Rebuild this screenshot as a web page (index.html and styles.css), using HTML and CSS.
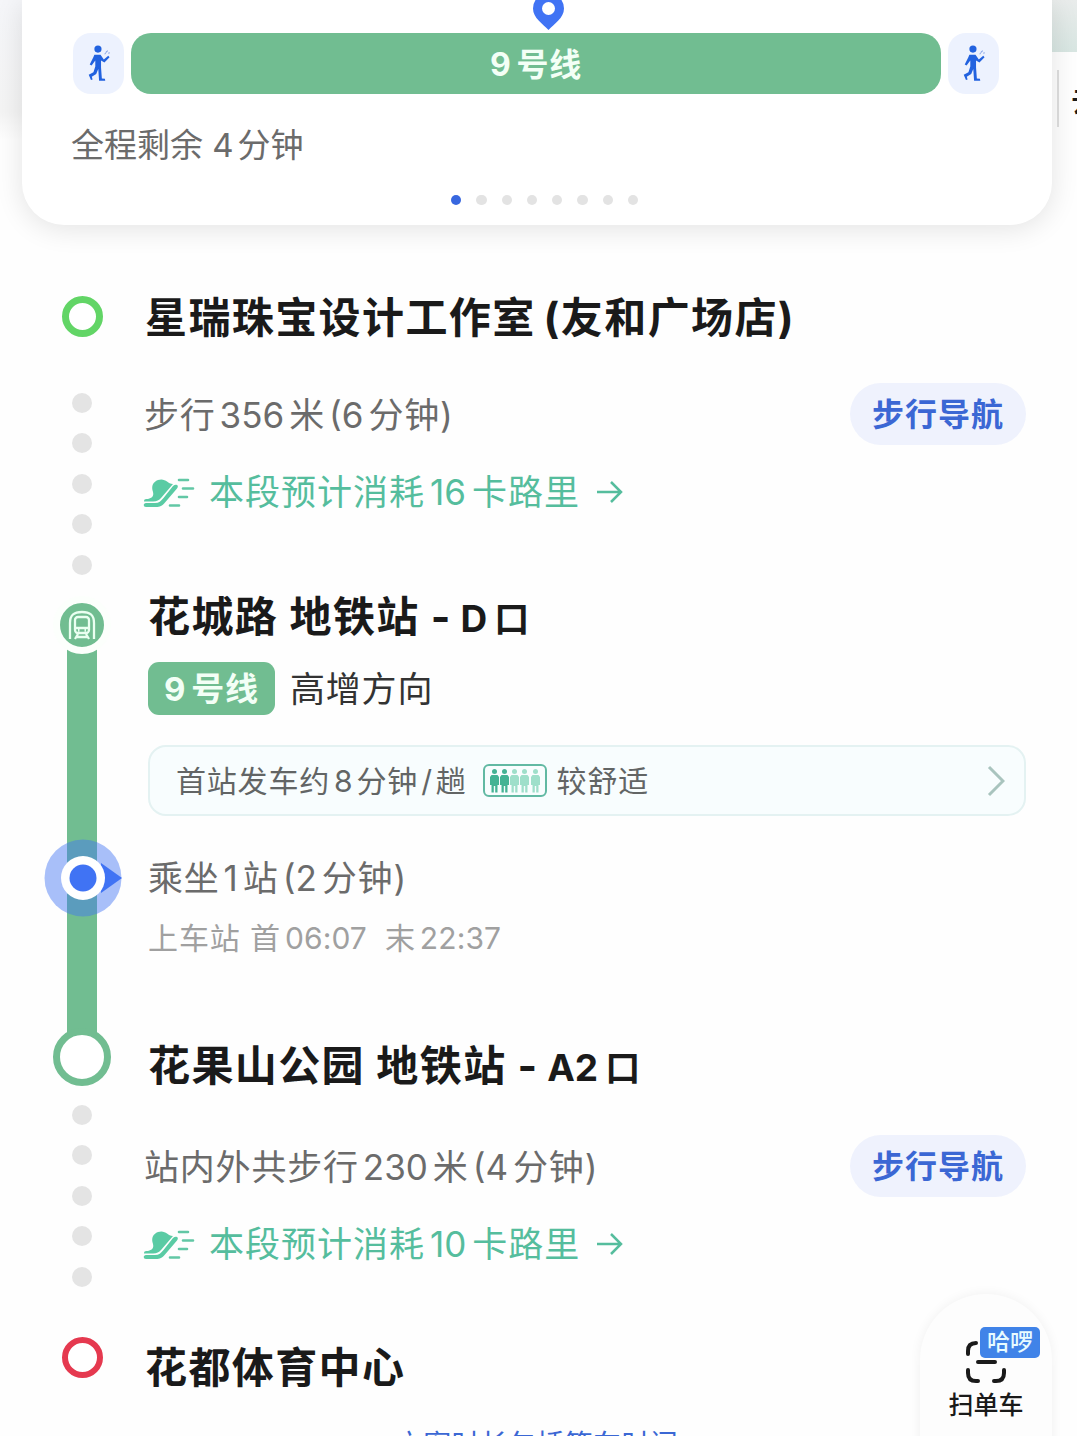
FILE: index.html
```html
<!DOCTYPE html>
<html lang="zh-CN">
<head>
    <meta charset="UTF-8">
    <meta name="viewport" content="width=device-width, initial-scale=1.0">
    <title>公交路线</title>
    <link rel="stylesheet" href="styles.css">
</head>
<body>
    <svg class="sprite" width="0" height="0">
        <symbol id="walker" viewBox="0 0 24 36">
            <circle cx="10.500" cy="4" r="3.500"/>
            <path d="M7 9.500h6l3.200 4.500 4.300-3.500 1.300 1.300-5 5.200-3.300-1.800v6.800l.8 10.500 3 .3.300 2h-6l-.8-11.500-2 5-4.300 2.700.8 2.500-1.600.5-2.200-5 4.600-2.600 1.800-5.400v-6l-3.600 5-1.800-1 3.500-7z"/>
            <path d="M18 7.500l2-2M20.500 8l1.500-.5M17 9l1-1" class="spark"/>
        </symbol>
        <symbol id="shoe" viewBox="0 0 52 32">
            <path d="M1 25c0-2 2-2 4-2 4-1 6-3 5-7-2-6 0-10 5-12 4-1.500 7 0 9 1.500 2 1.500 3 2.500 6 2.500L18 22c-2 2-4 3.500-8 3.500H1z"/>
            <path d="M30 10c3-2.500 6.500-.5 4 2.500L22 26.500c-3 3.500-5 4.500-9 4.500H3c-3 0-3-4 0-4h9c4 0 6-2 8.500-5z"/>
            <path d="M36 4h9M40 12.500h10M36 21h8M27 29.500h9" class="speed"/>
        </symbol>
        <symbol id="arrow" viewBox="0 0 27 24">
            <path d="M1 12h24M15 2l10 10-10 10"/>
        </symbol>
        <symbol id="person" viewBox="0 0 9 24">
            <circle cx="4.500" cy="2.500" r="2.500"/>
            <path d="M1.500 6h6L9 8v8H7.500v7.500h-2.300V17H3.800v6.500H1.500V16H0V8z"/>
        </symbol>
    </svg>

    <div class="map-left"></div>
    <div class="map-right"><span class="map-divider"></span><span class="map-label">去</span></div>

    <div class="card">
        <svg class="pin" width="31" height="34" viewBox="0 0 31 34">
            <path d="M15.500 34C10 28 0 22 0 12.500a15.500 15.500 0 0 1 31 0C31 22 21 28 15.500 34z"/>
            <circle cx="15.500" cy="12.500" r="6.500"/>
        </svg>
        <div class="route-bar">
            <span class="walk-chip"><svg><use href="#walker"/></svg></span>
            <span class="line-bar"><span class="n">9</span>号线</span>
            <span class="walk-chip"><svg><use href="#walker"/></svg></span>
        </div>
        <div class="remaining">全程剩余 <span class="n">4</span>分钟</div>
        <div class="pager">
            <i class="active"></i><i></i><i></i><i></i><i></i><i></i><i></i><i></i>
        </div>
    </div>

    <div class="timeline">
        <section class="stop origin">
            <div class="rail"><span class="ring green"></span></div>
            <h2>星瑞珠宝设计工作室<span class="paren">(</span>友和广场店)</h2>
        </section>

        <section class="walk">
            <div class="rail dots"><i></i><i></i><i></i><i></i><i></i></div>
            <div class="walk-body">
                <div class="walk-info">
                    <p>步行<span class="n">356</span>米<span class="n">(6</span>分钟)</p>
                    <a class="nav-btn">步行导航</a>
                </div>
                <div class="calorie">
                    <svg class="shoe"><use href="#shoe"/></svg>
                    <span class="calorie-text">本段预计消耗<span class="n">16</span>卡路里</span>
                    <svg class="arrow"><use href="#arrow"/></svg>
                </div>
            </div>
        </section>

        <section class="metro">
            <div class="rail">
                <span class="train">
                    <svg width="28" height="30" viewBox="0 0 28 30">
                        <path d="M2 29V13C2 5 6 2 14 2s12 3 12 11v16"/>
                        <rect x="7" y="7" width="14" height="16" rx="3"/>
                        <path d="M7 18h14M10 20.500h1.500M16.500 20.500H18M10 24l-3 5M18 24l3 5M9 27h10"/>
                    </svg>
                </span>
                <span class="track"></span>
                <svg class="location" width="80" height="78" viewBox="0 0 80 78">
                    <circle class="halo" cx="39" cy="39" r="38.500"/>
                    <path d="M57 24l21 15-21 15z"/>
                    <circle class="white" cx="39" cy="39" r="22"/>
                    <circle cx="39" cy="39" r="13.500"/>
                </svg>
            </div>
            <div class="metro-body">
                <h2>花城路 地铁站<span class="dash">-</span><span class="exit">D</span><span class="exit-cn">口</span></h2>
                <div class="direction">
                    <span class="badge"><span class="n">9</span>号线</span>
                    <span>高增方向</span>
                </div>
                <div class="schedule">
                    <span>首站发车约<span class="n">8</span>分钟<span class="slash">/</span>趟</span>
                    <span class="crowd">
                        <svg><use href="#person"/></svg><svg><use href="#person"/></svg><svg class="dim"><use href="#person"/></svg><svg class="dim"><use href="#person"/></svg><svg class="dim"><use href="#person"/></svg>
                    </span>
                    <span>较舒适</span>
                    <svg class="chevron" width="18" height="32" viewBox="0 0 18 32"><path d="M2 2l14 14L2 30"/></svg>
                </div>
                <p class="ride">乘坐<span class="n">1</span>站<span class="n">(2</span>分钟)</p>
                <p class="hours">上车站 首<span class="n">06:07</span><span class="last">末</span><span class="n">22:37</span></p>
            </div>
        </section>

        <section class="stop transfer">
            <div class="rail"><span class="ring station"></span></div>
            <h2>花果山公园 地铁站<span class="dash">-</span><span class="exit">A2</span><span class="exit-cn">口</span></h2>
        </section>

        <section class="walk second">
            <div class="rail dots"><i></i><i></i><i></i><i></i><i></i></div>
            <div class="walk-body">
                <div class="walk-info">
                    <p>站内外共步行<span class="n">230</span>米<span class="n">(4</span>分钟)</p>
                    <a class="nav-btn">步行导航</a>
                </div>
                <div class="calorie">
                    <svg class="shoe"><use href="#shoe"/></svg>
                    <span class="calorie-text">本段预计消耗<span class="n">10</span>卡路里</span>
                    <svg class="arrow"><use href="#arrow"/></svg>
                </div>
            </div>
        </section>

        <section class="stop destination">
            <div class="rail"><span class="ring red"></span></div>
            <h2>花都体育中心</h2>
        </section>
    </div>

    <p class="footnote">方案时长包括等车时间</p>

    <div class="scan">
        <div class="scan-icon">
            <svg width="40" height="42" viewBox="0 0 40 42">
                <path d="M2 13V10q0-8 8-8M2 29v3q0 8 8 8h2M38 29v3q0 8-8 8h-2M12 21h17"/>
            </svg>
            <span class="brand">哈啰</span>
        </div>
        <span>扫单车</span>
    </div>
</body>
</html>
```
FILE: styles.css
```css
:root {
    --green: #71bd91;
    --mint: #55bd9d;
    --blue: #4073f4;
    --link: #3b67d4;
    --text: #1a1a1a;
    --grey: #6b6b6b;
}

* {
    box-sizing: border-box;
}

body {
    position: relative;
    width: 1077px;
    height: 1436px;
    margin: 0;
    overflow: hidden;
    background-color: #fefefe;
    color: var(--text);
    font-family: Inter, 'Noto Sans CJK SC', sans-serif;
}

h2, p {
    margin: 0;
    white-space: nowrap;
}

.sprite {
    position: absolute;
}

/* map edges behind the card */
.map-left, .map-right {
    position: absolute;
    top: 0;
}

.map-left {
    left: 0;
    width: 60px;
    height: 140px;
    background: linear-gradient(#f5f6f9, #f4f4f4 80%, #fefefe);
}

.map-right {
    right: 0;
    width: 40px;
    height: 52px;
    background: linear-gradient(#e9eceb, #d8e6e2);
}

.map-divider {
    position: absolute;
    top: 70px;
    left: 20px;
    width: 2px;
    height: 57px;
    background-color: #dedede;
}

.map-label {
    position: absolute;
    top: 81px;
    left: 34px;
    font-size: 32px;
    font-weight: 500;
    line-height: 40px;
}

/* route card */
.card {
    position: relative;
    width: 1030px;
    height: 225px;
    margin-left: 22px;
    padding: 33px 53px 0 51px;
    border-radius: 0 0 42px 42px;
    background-color: #fff;
    box-shadow: 0 4px 28px rgba(0, 0, 0, 0.11);
}

.pin {
    position: absolute;
    top: -4px;
    left: 511px;
    fill: var(--blue);
}

.pin circle {
    fill: #fff;
}

.route-bar {
    display: flex;
    gap: 7px;
    height: 61px;
}

.walk-chip {
    display: flex;
    justify-content: center;
    align-items: center;
    width: 51px;
    height: 61px;
    border-radius: 18px;
    background-color: #edf2fe;
}

.walk-chip svg {
    width: 25px;
    height: 37px;
    margin-left: 2px;
    fill: #2262df;
}

.spark {
    fill: none;
    stroke: #8aa6e6;
    stroke-width: 1;
}

.line-bar {
    flex: 1;
    border-radius: 20px;
    background-color: var(--green);
    color: #f3fff6;
    font-size: 32px;
    font-weight: 700;
    letter-spacing: 0.800px;
    line-height: 63px;
    text-align: center;
}

.line-bar .n, .badge .n {
    margin-right: 5px;
}

.remaining {
    margin: 27px 0 0 -2px;
    color: var(--grey);
    font-size: 33px;
    line-height: 48px;
}

.remaining .n {
    margin-right: 4px;
}

.pager {
    display: flex;
    gap: 15px;
    margin: 26px 0 0 378px;
}

.pager i {
    width: 10.3px;
    height: 10.3px;
    border-radius: 50%;
    background-color: #e3e3e3;
}

.pager .active {
    background-color: #3867df;
}

/* timeline */
.timeline {
    padding-top: 56px;
}

section {
    display: flex;
}

.rail {
    position: relative;
    display: flex;
    flex: none;
    flex-direction: column;
    align-items: center;
    width: 164px;
    margin-right: -20px;
}

h2 {
    font-size: 42px;
    font-weight: 700;
    letter-spacing: 1.400px;
    line-height: 60px;
}

.origin {
    height: 72px;
}

.origin h2 {
    padding: 7px 0 0 1px;
}

.paren {
    margin-left: 8px;
}

.ring {
    width: 41px;
    height: 41px;
    border-radius: 50%;
    background-color: #fff;
}

.ring.green {
    margin-top: 15px;
    border: 7px solid #62d566;
}

.ring.red {
    margin-top: 16px;
    border: 6px solid #e5394f;
}

.ring.station {
    z-index: 1;
    width: 58px;
    height: 58px;
    border: 7px solid var(--green);
}

.walk {
    height: 231px;
}

.dots {
    gap: 20.400px;
    padding-top: 40px;
}

.dots i {
    flex: none;
    width: 20px;
    height: 20px;
    border-radius: 50%;
    background-color: #e4e4e4;
}

.walk-body {
    width: 882px;
    padding-top: 30px;
}

.walk-info {
    display: flex;
    justify-content: space-between;
    align-items: center;
    height: 62px;
}

.walk-info p, .ride {
    color: var(--grey);
    font-size: 35px;
    letter-spacing: 0.800px;
    line-height: 64px;
}

.walk-info p {
    padding-top: 2px;
}

.walk-info .n, .ride .n {
    margin: 0 5px 0 4px;
    letter-spacing: 0;
}

.nav-btn {
    width: 176px;
    height: 62px;
    border-radius: 31px;
    background-color: #eff2fd;
    color: var(--link);
    font-size: 32px;
    font-weight: 700;
    letter-spacing: 1px;
    line-height: 64px;
    text-align: center;
}

.calorie {
    display: flex;
    align-items: center;
    height: 50px;
    margin-top: 22px;
    color: var(--mint);
    font-size: 35px;
    letter-spacing: 1px;
    line-height: 50px;
}

.calorie .n {
    margin: 0 6px 0 5px;
    letter-spacing: 0;
}

.shoe {
    width: 52px;
    height: 32px;
    margin-right: 14px;
    margin-left: -1px;
    fill: #5acba4;
}

.speed {
    stroke: #62c7a5;
    stroke-width: 2.600;
    stroke-linecap: round;
}

.arrow {
    width: 27px;
    height: 24px;
    margin-left: 16px;
    fill: none;
    stroke: var(--mint);
    stroke-width: 2.500;
}

/* metro leg */
.metro {
    height: 444px;
}

.train {
    z-index: 1;
    display: flex;
    justify-content: center;
    align-items: center;
    flex: none;
    width: 58px;
    height: 58px;
    margin-top: 12px;
    border: 7px solid #fcfffc;
    border-radius: 50%;
    background-color: var(--green);
}

.train svg {
    fill: none;
    stroke: #eafff1;
    stroke-width: 2.300;
}

.track {
    flex: none;
    width: 30px;
    height: 396px;
    margin-top: -10px;
    background-color: var(--green);
}

.location {
    position: absolute;
    top: 255px;
    left: 44px;
    fill: var(--blue);
}

.location .halo {
    opacity: 0.450;
}

.location .white {
    fill: #fff;
}

.metro-body {
    width: 882px;
    padding: 3px 0 0 4px;
}

.dash {
    margin: 0 10px 0 11px;
    letter-spacing: 0;
}

.exit {
    font-size: 37px;
    letter-spacing: 0;
}

.exit-cn {
    margin-left: 7px;
    font-size: 35px;
}

.direction {
    display: flex;
    gap: 15px;
    height: 53px;
    margin-top: 13px;
    color: #333;
    font-size: 35px;
    letter-spacing: 0.800px;
    line-height: 55px;
}

.badge {
    width: 127px;
    border-radius: 11px;
    background-color: var(--green);
    color: #f3fff6;
    font-size: 33px;
    font-weight: 700;
    text-align: center;
}

.schedule {
    display: flex;
    align-items: center;
    height: 71px;
    margin-top: 30px;
    padding: 0 19px 0 26px;
    border: 2px solid #e4f2f2;
    border-radius: 18px;
    background-color: #f8fdfe;
    color: #626565;
    font-size: 30px;
    letter-spacing: 0.800px;
    line-height: 40px;
}

.schedule .n {
    margin: 0 4px;
    letter-spacing: 0;
}

.slash {
    margin: 0 3px;
}

.crowd {
    display: flex;
    justify-content: space-between;
    align-items: center;
    width: 64px;
    height: 33px;
    margin: 0 10px 0 16px;
    padding: 0 5px;
    border: 2px solid #62b9a3;
    border-radius: 6px;
}

.crowd svg {
    width: 9px;
    height: 24px;
    fill: #44b394;
}

.crowd .dim {
    fill: #9edfca;
}

.chevron {
    margin-left: auto;
    fill: none;
    stroke: #a9c4be;
    stroke-width: 3;
}

.ride {
    margin-top: 30px;
}

.hours {
    color: #a0a0a0;
    font-size: 30px;
    letter-spacing: 0.900px;
    line-height: 56px;
}

.hours .n {
    margin-left: 4px;
    letter-spacing: 0.100px;
}

.last {
    margin-left: 18px;
}

.transfer {
    height: 58px;
}

.transfer h2 {
    padding: 8px 0 0 4px;
}

.second .dots {
    padding-top: 19px;
}

.second .walk-body {
    padding-top: 49px;
}

.second {
    height: 235px;
}

.destination {
    height: 76px;
}

.destination h2 {
    padding: 17px 0 0 1px;
}

.footnote {
    margin: 28px 0 0 395px;
    color: var(--link);
    font-size: 28px;
    letter-spacing: 0.300px;
    line-height: 40px;
}

/* floating scan button */
.scan {
    position: absolute;
    top: 1294px;
    left: 920px;
    display: flex;
    flex-direction: column;
    align-items: center;
    width: 132px;
    height: 200px;
    padding-top: 47px;
    border-radius: 66px 66px 0 0;
    background-color: #fdfdfd;
    box-shadow: 0 0 12px rgba(0, 0, 0, 0.060);
    font-size: 25px;
    font-weight: 500;
    line-height: 40px;
}

.scan-icon {
    position: relative;
    height: 44px;
}

.scan-icon svg {
    fill: none;
    stroke: #1a1a1a;
    stroke-width: 4;
    stroke-linecap: round;
}

.brand {
    position: absolute;
    top: -14px;
    left: 14px;
    width: 60px;
    border-radius: 5px;
    background-color: #4083e8;
    box-shadow: 0 0 0 2px #fdfdfd;
    color: #e8fbff;
    font-size: 23px;
    font-weight: 500;
    line-height: 31px;
    text-align: center;
}
```
